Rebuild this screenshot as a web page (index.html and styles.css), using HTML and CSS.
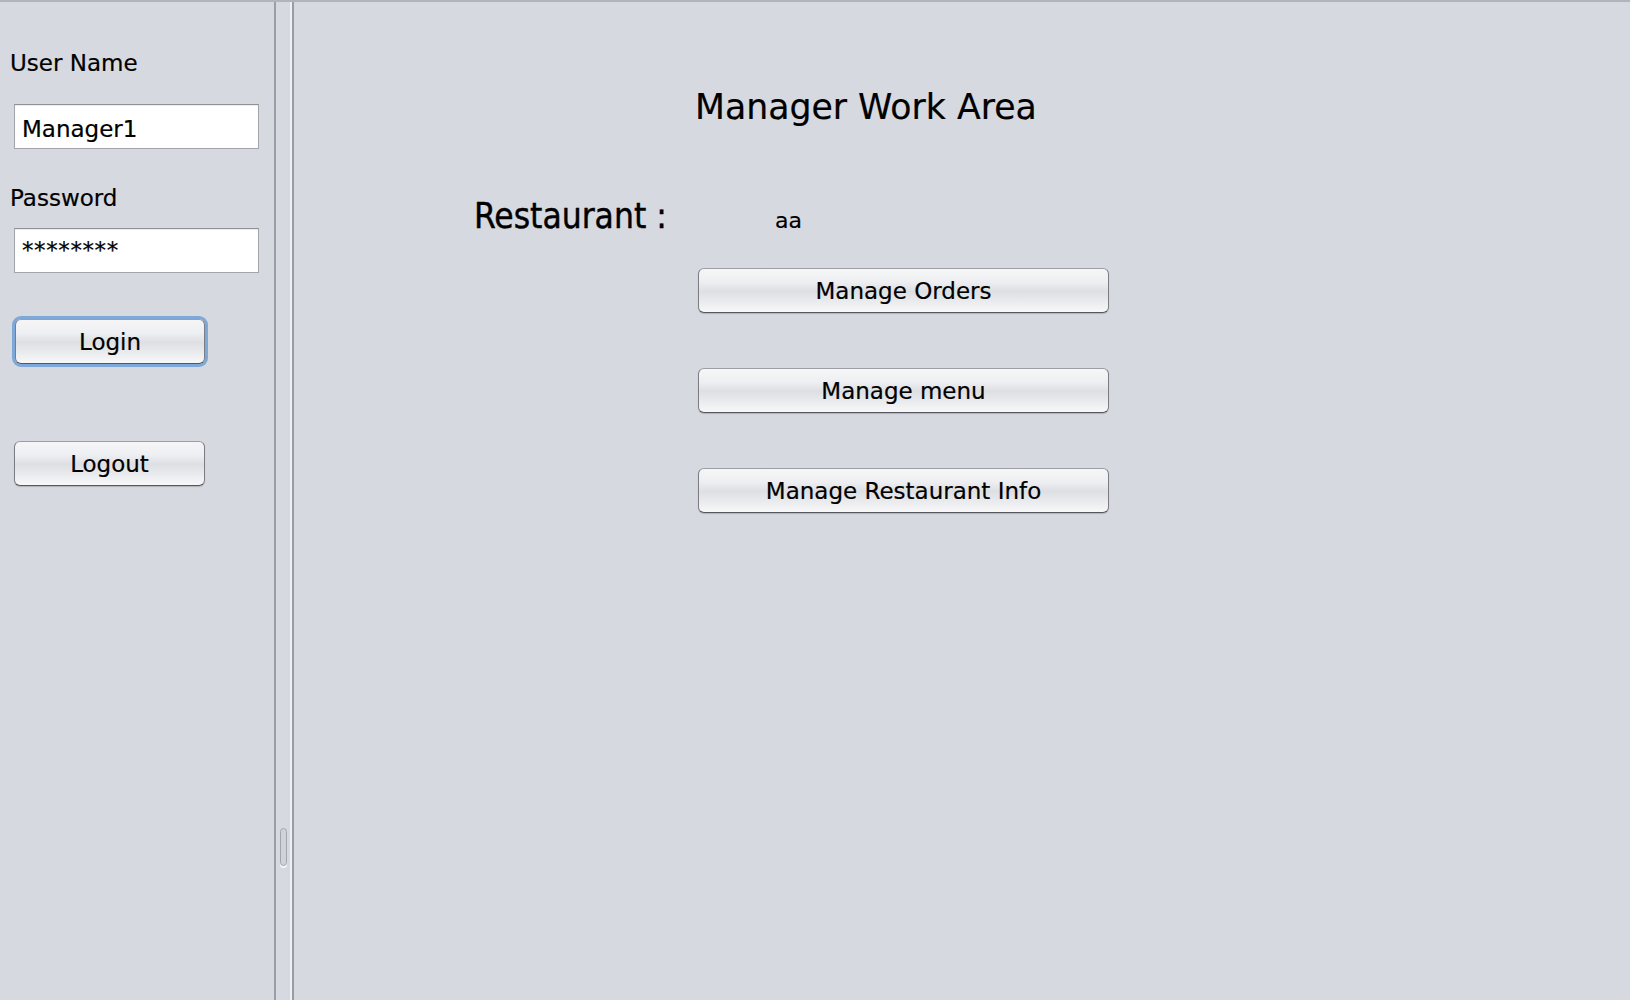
FILE: index.html
```html
<!DOCTYPE html>
<html>
<head>
<meta charset="utf-8">
<link rel="stylesheet" href="styles.css">
<title>Manager Work Area</title>
</head>
<body>
<div class="window">
  <div class="left">
    <div class="label first">User Name</div>
    <div class="field">Manager1</div>
    <div class="label second">Password</div>
    <div class="field pw">********</div>
    <div class="btn small login">Login</div>
    <div class="btn small logout">Logout</div>
  </div>
  <div class="divider">
    <div class="line-a"></div>
    <div class="gap">
      <div class="handle"></div>
    </div>
    <div class="line-hi"></div>
    <div class="line-b"></div>
  </div>
  <div class="right">
    <div class="title">Manager Work Area</div>
    <div class="rest-row">
      <div class="rest-label">Restaurant :</div>
      <div class="rest-value">aa</div>
    </div>
    <div class="actions">
      <div class="btn wide">Manage Orders</div>
      <div class="btn wide">Manage menu</div>
      <div class="btn wide">Manage Restaurant Info</div>
    </div>
  </div>
</div>
</body>
</html>
```
FILE: styles.css
```css
html, body {
  margin: 0;
  padding: 0;
  height: 100%;
  overflow: hidden;
}
body {
  background: #d6d9df;
  font-family: "DejaVu Sans", "Liberation Sans", sans-serif;
  color: #000;
  -webkit-text-stroke: 0.2px #000;
}
.window {
  display: flex;
  height: 998px;
  border-top: 2px solid #b1b4ba;
}
.left {
  width: 274px;
  flex: none;
  display: flex;
  flex-direction: column;
  align-items: flex-start;
}
.label {
  font-size: 23px;
  line-height: 26px;
  padding-left: 10px;
}
.label.first { margin-top: 48px; }
.label.second { margin-top: 36px; }
.field {
  margin-left: 14px;
  width: 236px;
  height: 37px;
  padding: 6px 0 0 7px;
  background: #fff;
  border: 1px solid #a3a5aa;
  border-top-color: #8e9095;
  font-size: 23px;
  line-height: 37px;
  box-shadow: inset 0 1px 1px rgba(0,0,0,0.08);
}
.left .field { margin-top: 28px; }
.left .field.pw {
  margin-top: 17px;
  padding-top: 3px;
  height: 40px;
  letter-spacing: 0.6px;
}
.btn {
  box-sizing: border-box;
  height: 45px;
  border: 1px solid #7b7d82;
  border-top-color: #9c9ea3;
  border-bottom-color: #55575c;
  border-radius: 6px;
  background: linear-gradient(to bottom, #f6f6f8 0%, #eeeff2 30%, #dedfe3 52%, #e8e9ec 72%, #f8f8fa 100%);
  box-shadow: 0 1px 1px rgba(0,0,0,0.18);
  text-align: center;
  font-size: 23px;
  line-height: 41px;
  padding-top: 2px;
}
.btn.small {
  width: 191px;
  margin-left: 14px;
}
.btn.login {
  margin-top: 46px;
  margin-left: 15px;
  width: 190px;
  box-shadow: 0 0 0 3px #7ea8d8;
}
.btn.logout {
  margin-top: 77px;
}
.divider {
  width: 20px;
  flex: none;
  display: flex;
}
.line-a {
  width: 2px;
  background: #9a9ea7;
}
.gap {
  width: 14px;
  position: relative;
}
.handle {
  position: absolute;
  left: 4px;
  top: 826px;
  width: 5px;
  height: 36px;
  border: 1px solid #a2a5ad;
  border-radius: 4px;
  background: #cfd2d8;
  box-shadow: 0 2px 0 #f4f5f7;
}
.line-hi {
  width: 2px;
  background: #eef0f3;
}
.line-b {
  width: 2px;
  background: #989ca5;
}
.right {
  flex: 1;
  display: flex;
  flex-direction: column;
  align-items: flex-start;
}
.title {
  margin-top: 85px;
  margin-left: 401px;
  font-size: 34.7px;
  line-height: 40px;
}
.rest-row {
  margin-top: 69px;
  margin-left: 180px;
  display: flex;
  align-items: baseline;
}
.rest-label {
  width: 301px;
  font-family: "DejaVu Sans Condensed", "DejaVu Sans", sans-serif;
  font-stretch: condensed;
  font-size: 35px;
  line-height: 40px;
  -webkit-text-stroke: 0.4px #000;
}
.rest-value {
  font-size: 22px;
  line-height: 26px;
}
.actions {
  margin-top: 32px;
  margin-left: 404px;
  display: flex;
  flex-direction: column;
  gap: 55px;
}
.btn.wide {
  width: 411px;
}
```
